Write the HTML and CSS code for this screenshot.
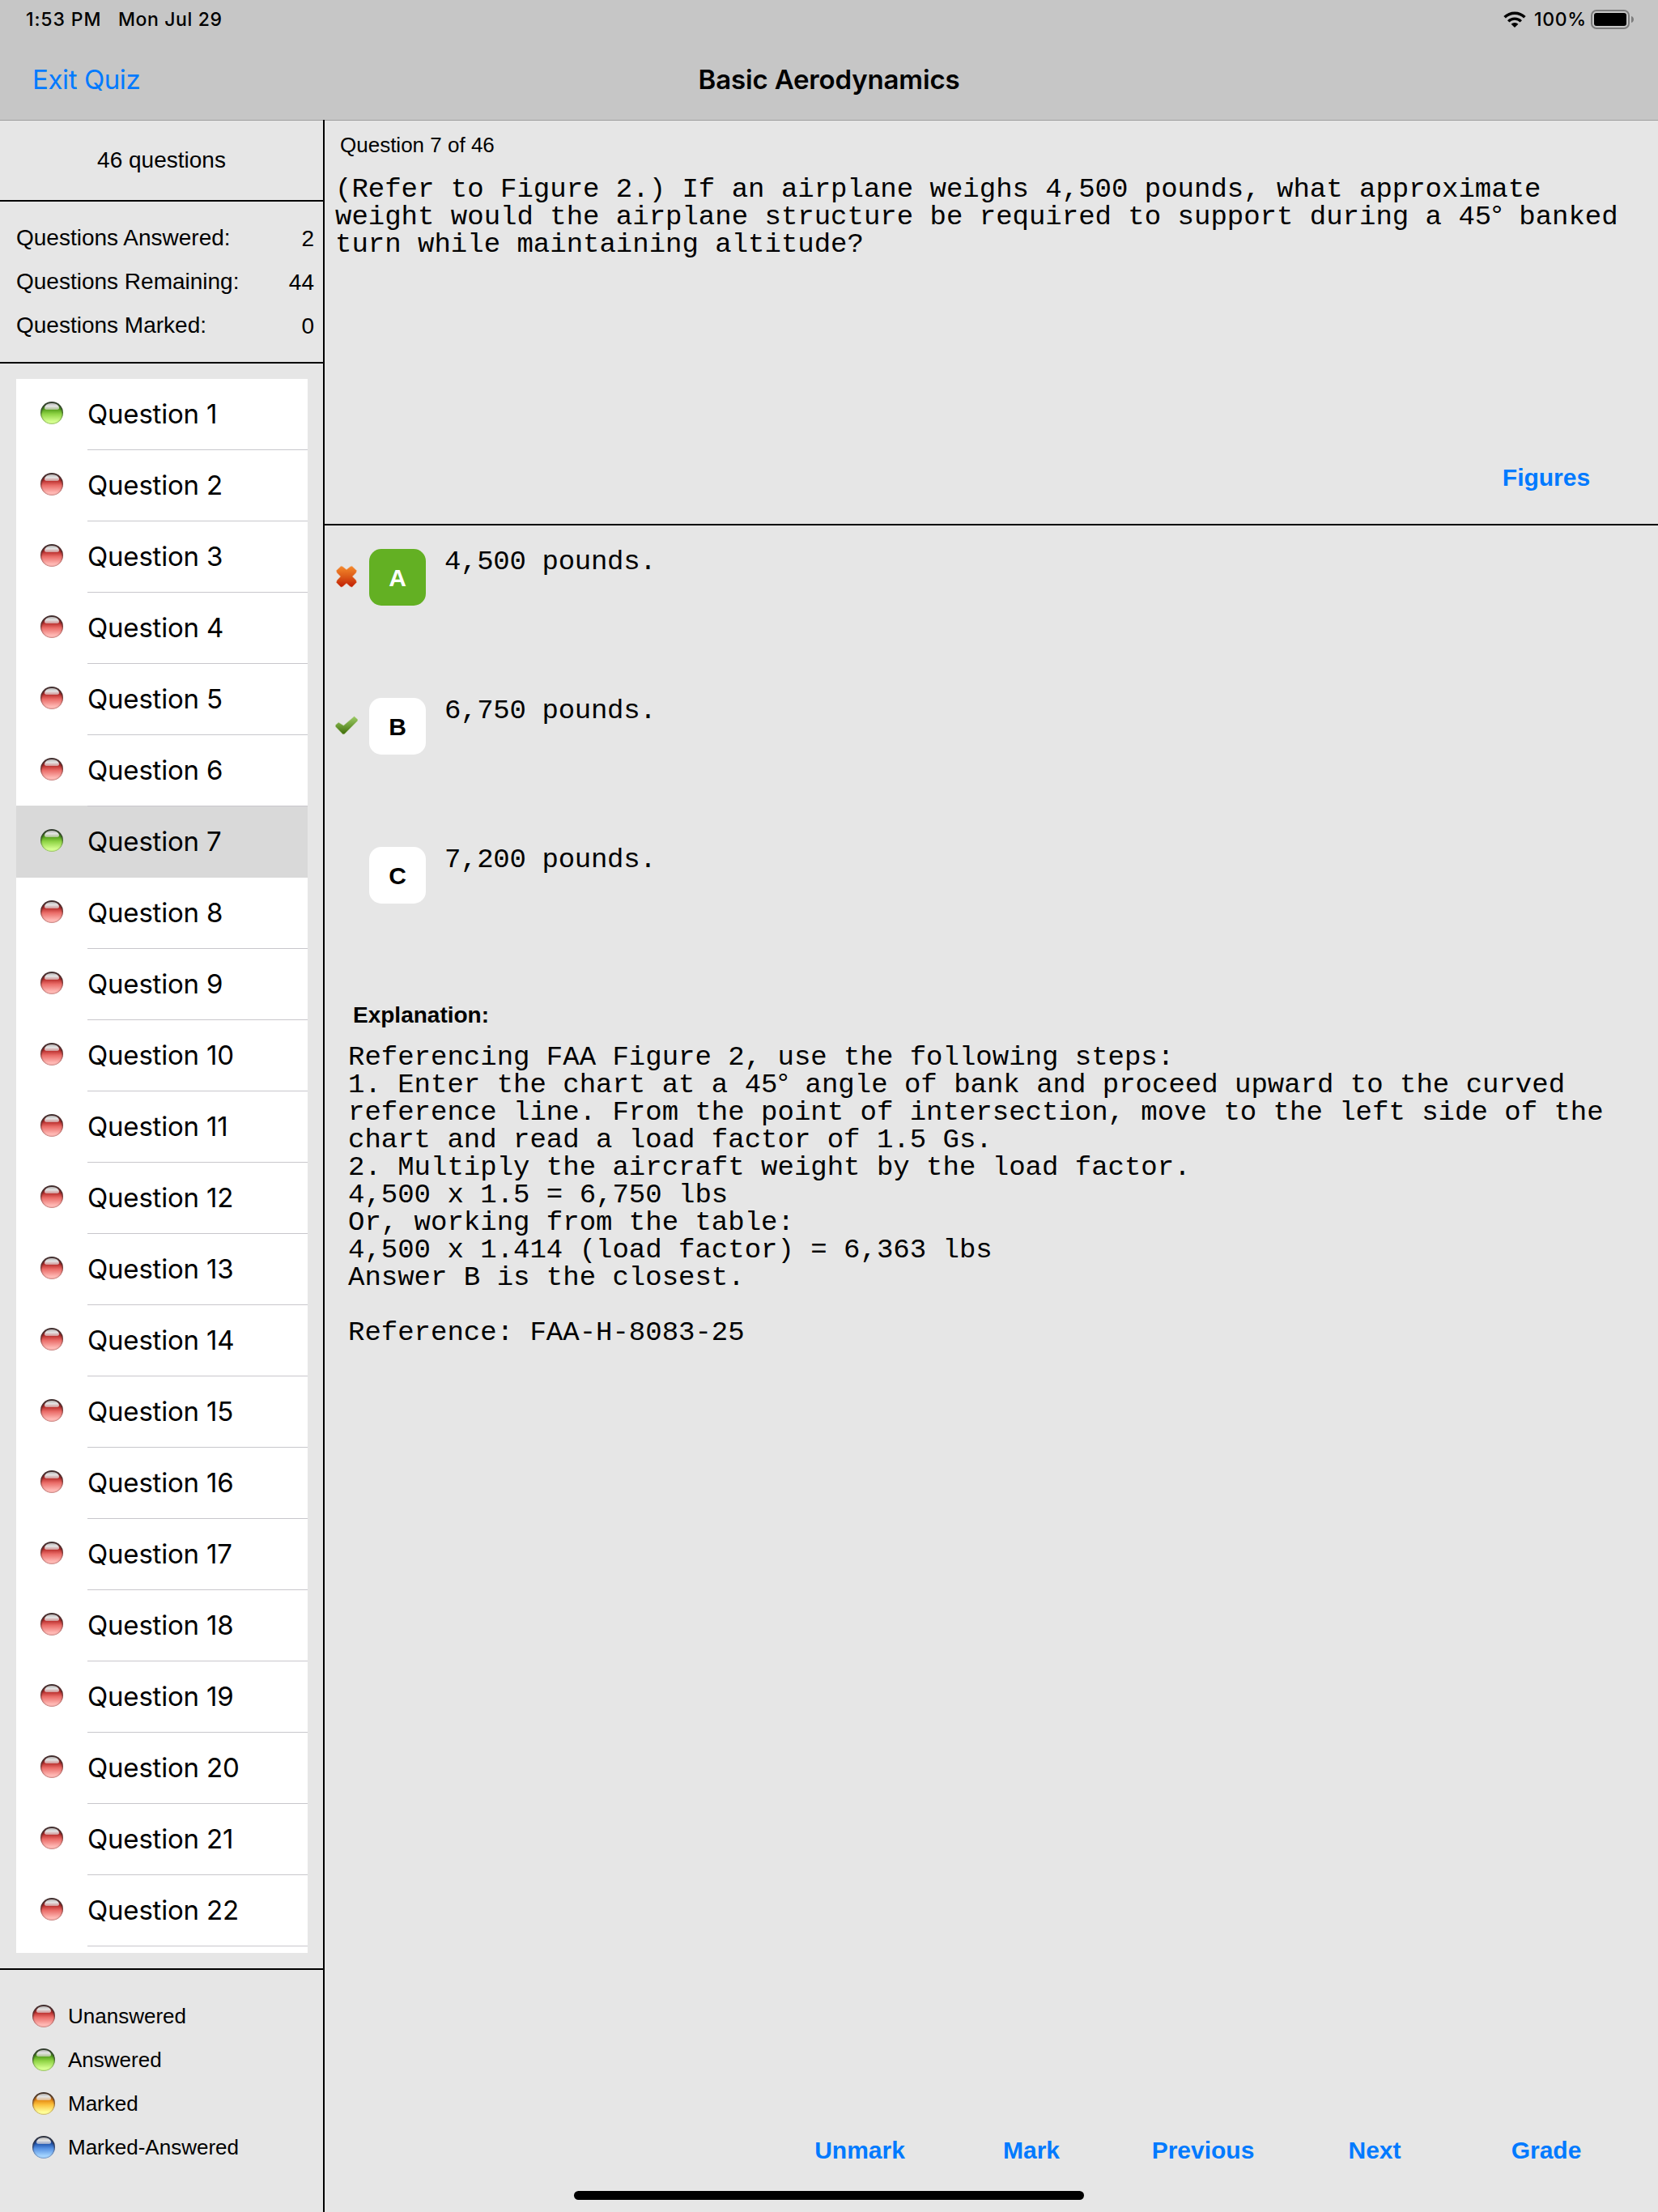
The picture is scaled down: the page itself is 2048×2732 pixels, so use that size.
FILE: index.html
```html
<!DOCTYPE html>
<html lang="en">
<head>
<meta charset="utf-8">
<title>Basic Aerodynamics</title>
<link rel="stylesheet" href="styles.css">
</head>
<body>
<header class="topbar">
  <div class="status">
    <span class="status-time">1:53 PM</span>
    <span class="status-date">Mon Jul 29</span>
    <svg class="wifi" viewBox="0 0 28 20" width="28" height="20">
      <path d="M1.6 7.3A17.6 17.6 0 0 1 26.4 7.3" fill="none" stroke="#000" stroke-width="3.6"/>
      <path d="M6.2 12.4A11 11 0 0 1 21.8 12.4" fill="none" stroke="#000" stroke-width="3.4"/>
      <path d="M14 20L9.6 15.8A6.2 6.2 0 0 1 18.4 15.8Z"/>
    </svg>
    <span class="status-percent">100%</span>
    <svg class="battery" viewBox="0 0 54 24" width="54" height="24">
      <rect x="1" y="1" width="46" height="22" rx="6" fill="none" stroke="#7c7c7c" stroke-width="2"/>
      <rect x="4" y="4" width="40" height="16" rx="3"/>
      <path d="M50 8C54 9 54 15 50 16Z" fill="#7c7c7c"/>
    </svg>
  </div>
  <nav class="navbar">
    <a class="exit">Exit Quiz</a>
    <h1 class="title">Basic Aerodynamics</h1>
  </nav>
</header>
<div class="content">
  <aside class="sidebar">
    <div class="total">46 questions</div>
    <dl class="stats">
      <div class="stat"><dt>Questions Answered:</dt><dd>2</dd></div>
      <div class="stat"><dt>Questions Remaining:</dt><dd>44</dd></div>
      <div class="stat"><dt>Questions Marked:</dt><dd>0</dd></div>
    </dl>
    <div class="list-area">
      <ul class="list">
        <li class="row"><i class="orb green"></i><span class="label">Question 1</span></li>
        <li class="row"><i class="orb red"></i><span class="label">Question 2</span></li>
        <li class="row"><i class="orb red"></i><span class="label">Question 3</span></li>
        <li class="row"><i class="orb red"></i><span class="label">Question 4</span></li>
        <li class="row"><i class="orb red"></i><span class="label">Question 5</span></li>
        <li class="row"><i class="orb red"></i><span class="label">Question 6</span></li>
        <li class="row selected"><i class="orb green"></i><span class="label">Question 7</span></li>
        <li class="row"><i class="orb red"></i><span class="label">Question 8</span></li>
        <li class="row"><i class="orb red"></i><span class="label">Question 9</span></li>
        <li class="row"><i class="orb red"></i><span class="label">Question 10</span></li>
        <li class="row"><i class="orb red"></i><span class="label">Question 11</span></li>
        <li class="row"><i class="orb red"></i><span class="label">Question 12</span></li>
        <li class="row"><i class="orb red"></i><span class="label">Question 13</span></li>
        <li class="row"><i class="orb red"></i><span class="label">Question 14</span></li>
        <li class="row"><i class="orb red"></i><span class="label">Question 15</span></li>
        <li class="row"><i class="orb red"></i><span class="label">Question 16</span></li>
        <li class="row"><i class="orb red"></i><span class="label">Question 17</span></li>
        <li class="row"><i class="orb red"></i><span class="label">Question 18</span></li>
        <li class="row"><i class="orb red"></i><span class="label">Question 19</span></li>
        <li class="row"><i class="orb red"></i><span class="label">Question 20</span></li>
        <li class="row"><i class="orb red"></i><span class="label">Question 21</span></li>
        <li class="row"><i class="orb red"></i><span class="label">Question 22</span></li>
      </ul>
    </div>
    <ul class="legend">
      <li><i class="orb red"></i>Unanswered</li>
      <li><i class="orb green"></i>Answered</li>
      <li><i class="orb yellow"></i>Marked</li>
      <li><i class="orb blue"></i>Marked-Answered</li>
    </ul>
  </aside>
  <main class="main">
    <section class="question">
      <p class="counter">Question 7 of 46</p>
      <p class="mono question-text">(Refer to Figure 2.) If an airplane weighs 4,500 pounds, what approximate
weight would the airplane structure be required to support during a 45<span class="degree">°</span> banked
turn while maintaining altitude?</p>
      <a class="action figures">Figures</a>
    </section>
    <section class="answers">
      <div class="answer">
        <svg class="mark" viewBox="0 0 28 28" width="28" height="28">
          <defs><linearGradient id="cross" x1="0" y1="0" x2="0" y2="1"><stop offset="0" stop-color="#f58a2c"/><stop offset=".5" stop-color="#dc5a18"/><stop offset="1" stop-color="#c01c04"/></linearGradient></defs>
          <path d="M7.2 1.2L9.2 1.8L14 5.4L18.8 1.8L20.8 1.2L26.6 6.8L25.8 9.4L21.4 14L25.8 18.6L26.6 21.2L20.8 27.2L18.6 26.4L14 22.4L9.4 26.4L7.2 27.2L1.4 21.4L2.2 18.8L6.6 14L2.2 9.4L1.4 6.8Z" fill="url(#cross)" stroke="#eab795" stroke-opacity=".6" stroke-width=".8" stroke-linejoin="round"/>
        </svg>
        <span class="choice chosen">A</span>
        <p class="mono">4,500 pounds.</p>
      </div>
      <div class="answer">
        <svg class="mark" viewBox="0 0 28 28" width="28" height="28">
          <defs><linearGradient id="tick" x1="0" y1="0" x2="0" y2="1"><stop offset="0" stop-color="#9ccb66"/><stop offset=".5" stop-color="#6f9f38"/><stop offset="1" stop-color="#3f6c08"/></linearGradient></defs>
          <path d="M.4 13.4L4.2 10.2L10.4 14L23.6 2.8L27.8 6.6V8.2L11.6 24.6L9.6 25L.4 15.6Z" fill="url(#tick)" stroke="#c3d8a8" stroke-opacity=".6" stroke-width=".8" stroke-linejoin="round"/>
        </svg>
        <span class="choice">B</span>
        <p class="mono">6,750 pounds.</p>
      </div>
      <div class="answer">
        <span class="mark"></span>
        <span class="choice">C</span>
        <p class="mono">7,200 pounds.</p>
      </div>
    </section>
    <section class="explanation">
      <h2>Explanation:</h2>
      <p class="mono">Referencing FAA Figure 2, use the following steps:
1. Enter the chart at a 45<span class="degree">°</span> angle of bank and proceed upward to the curved
reference line. From the point of intersection, move to the left side of the
chart and read a load factor of 1.5 Gs.
2. Multiply the aircraft weight by the load factor.
4,500 x 1.5 = 6,750 lbs
Or, working from the table:
4,500 x 1.414 (load factor) = 6,363 lbs
Answer B is the closest.

Reference: FAA-H-8083-25</p>
    </section>
    <nav class="toolbar">
      <a class="action">Unmark</a>
      <a class="action">Mark</a>
      <a class="action">Previous</a>
      <a class="action">Next</a>
      <a class="action">Grade</a>
    </nav>
  </main>
</div>
<div class="home-indicator"></div>
</body>
</html>
```

FILE: styles.css
```css
* { box-sizing: border-box; margin: 0; padding: 0; }
body {
  width: 2048px;
  height: 2732px;
  overflow: hidden;
  display: flex;
  flex-direction: column;
  background: #e6e6e6;
  color: #000;
  font-family: "Liberation Sans", Arial, sans-serif;
}
ul { list-style: none; }
svg { display: block; }

.topbar {
  flex: none;
  height: 149px;
  background: #c6c6c6;
  border-bottom: 1px solid #9e9e9e;
  font-family: Inter, sans-serif;
}
.status {
  display: flex;
  align-items: center;
  height: 48px;
  padding: 0 29px 0 32px;
  font-size: 23px;
  font-weight: 500;
  letter-spacing: 0.6px;
}
.status-time { width: 114px; letter-spacing: 0.9px; }
.status-date { margin-right: auto; }
.wifi { margin-right: 10px; }
.status-percent { width: 70px; letter-spacing: 0.7px; }
.navbar {
  display: grid;
  grid-template-columns: 1fr auto 1fr;
  align-items: center;
  height: 100px;
  padding: 0 40px;
}
.exit { color: #007aff; font-size: 33px; letter-spacing: -0.4px; }
.title { font-size: 33px; font-weight: 600; letter-spacing: -0.15px; }

.content { flex: 1; display: flex; min-height: 0; }
.sidebar {
  width: 401px;
  margin-top: -1px;
  display: flex;
  flex-direction: column;
  border-right: 2px solid #000;
}
.total {
  height: 101px;
  border-bottom: 2px solid #000;
  font-size: 28px;
  line-height: 99px;
  text-align: center;
}
.stats {
  height: 200px;
  padding: 18px 11px 0 20px;
  border-bottom: 2px solid #000;
}
.stat {
  display: flex;
  justify-content: space-between;
  height: 54px;
  font-size: 28px;
  line-height: 54px;
}
.stat dd { padding-top: 1px; }
.list-area { flex: 1; min-height: 0; padding: 19px 19px 19px 20px; }
.list { height: 1944px; background: #fff; overflow: hidden; }
.row { display: flex; height: 88px; padding-left: 30px; }
.row .orb { margin: 28px 30px 0 0; }
.label {
  flex: 1;
  border-bottom: 1px solid #c8c7cc;
  font: 33px/86px Inter, sans-serif;
  letter-spacing: -0.2px;
}
.row.selected { margin-top: -1px; height: 89px; padding-top: 1px; background: #d9d9d9; }
.row.selected .label { border-color: #d9d9d9; }
.legend { height: 301px; padding: 30px 0 0 40px; border-top: 2px solid #000; }
.legend li {
  display: flex;
  align-items: center;
  gap: 16px;
  height: 54px;
  font-size: 26px;
}

.orb {
  flex: none;
  position: relative;
  width: 28px;
  height: 28px;
  border-radius: 50%;
  overflow: hidden;
  background:
    radial-gradient(circle at 50% 64%, transparent 52%, var(--rim) 90%),
    linear-gradient(var(--deep) 34%, var(--mid) 55%, var(--light) 88%);
  box-shadow: inset 0 2px 2px #333, inset 0 0 2px 0 var(--rim);
}
.orb::before {
  content: "";
  position: absolute;
  left: 5px;
  top: 2px;
  width: 18px;
  height: 8px;
  border-radius: 9px 9px 4px 4px / 7px 7px 2px 2px;
  background: linear-gradient(#b4b4b4, #e4e4e4 45%, rgba(225, 215, 215, .6));
}
.red { --light: #ffb9b5; --mid: #ea6c68; --deep: #b82e2c; --rim: #5b2020; }
.green { --light: #d6ff90; --mid: #8fd445; --deep: #56a01c; --rim: #254a20; }
.yellow { --light: #ffff98; --mid: #fbc03c; --deep: #e48a14; --rim: #6b3028; }
.blue { --light: #a4d4ff; --mid: #5590e2; --deep: #2257ae; --rim: #26264e; }

.main { flex: 1; display: flex; flex-direction: column; }
.mono {
  font: 34px/34px "Liberation Mono", "Courier New", monospace;
  white-space: pre;
}
.degree { font-family: "Liberation Sans", Arial, sans-serif; line-height: 0; }
.question {
  height: 500px;
  display: flex;
  flex-direction: column;
  border-bottom: 2px solid #000;
}
.counter { height: 68px; padding: 15px 0 0 19px; font-size: 26px; line-height: 30px; }
.question-text { padding-left: 13px; flex: 1; }
.action { color: #007aff; font-size: 30px; font-weight: bold; line-height: 34px; text-align: center; }
.figures { width: 212px; margin: 0 32px 40px auto; }
.answers { height: 581px; padding-top: 29px; }
.answer { display: flex; height: 184px; padding-left: 13px; }
.mark { flex: none; width: 28px; height: 28px; margin-top: 20px; }
.choice {
  flex: none;
  width: 70px;
  height: 70px;
  margin: 0 23px 0 14px;
  border-radius: 15px;
  background: #fff;
  font-size: 30px;
  font-weight: bold;
  line-height: 71px;
  text-align: center;
}
.chosen { background: #63b023; color: #fff; }
.answer .mono { margin-top: -1px; letter-spacing: -0.3px; }
.explanation { flex: 1; padding: 8px 0 0 29px; }
.explanation h2 { padding-left: 6px; height: 51px; font-size: 28px; line-height: 32px; }
.toolbar { display: grid; grid-template-columns: repeat(5, 212px); justify-content: end; padding-right: 32px; height: 93px; }
.home-indicator {
  position: absolute;
  left: 709px;
  top: 2706px;
  width: 630px;
  height: 11px;
  border-radius: 6px;
  background: #000;
}
```
